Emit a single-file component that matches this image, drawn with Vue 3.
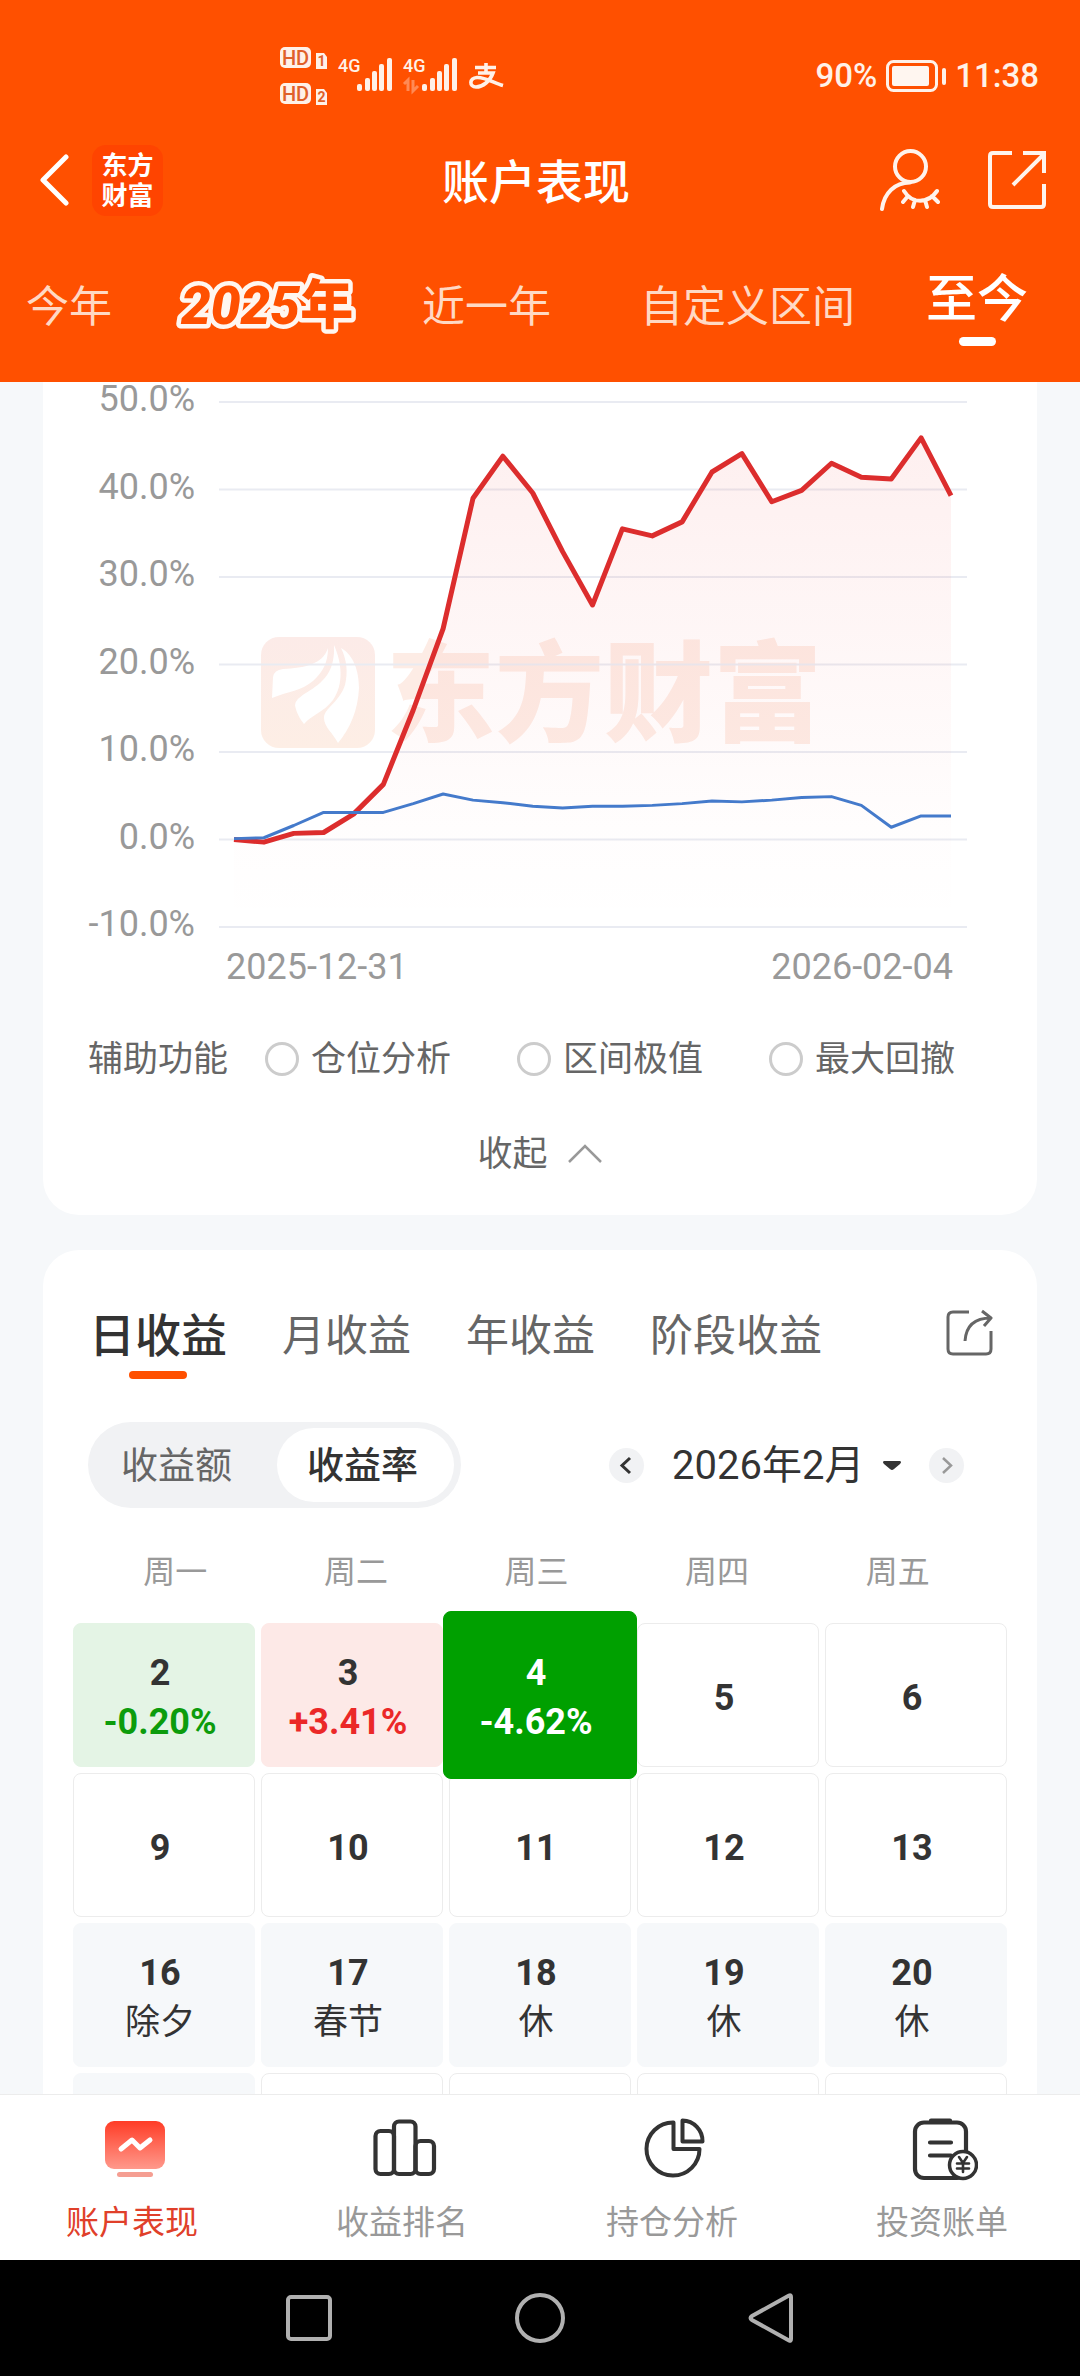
<template>
  <div class="app">
    <header class="header">
      <div class="status-bar">
        <svg class="status-icons" viewBox="0 0 224 62" aria-hidden="true">
          <g v-for="(n, i) in ['1', '2']" :key="n">
            <rect x="0" :y="2 + i * 36" width="31" height="21" rx="5" fill="#fff1e8" />
            <text x="15.5" :y="20 + i * 36" class="hd-text">HD</text>
            <path :d="`M36 ${8 + i * 36}h8l3 4v12h-11z`" fill="#fff1e8" />
            <text x="41.5" :y="21 + i * 36" class="sim-text">{{ n }}</text>
          </g>
          <g v-for="offset in [0, 65]" :key="offset">
            <text :x="58 + offset" y="27" class="net-text">4G</text>
            <rect
              v-for="(top, b) in signalTops"
              :key="top"
              :x="signalLefts[b] + offset"
              :y="top"
              width="5"
              :height="46 - top"
              rx="2"
              fill="#fff1e8"
            />
          </g>
          <path d="M124 39l4-4v11M133 35v11l5-5" fill="none" stroke="#ff8a55" stroke-width="3" />
          <path
            d="M195 22.5H216M206 18V28M198 28H213C210 36 203 42 196 42C189 42 189 33 197 32.5C205 32 214 38 223 40.5"
            fill="none"
            stroke="#fff1e8"
            stroke-width="3.6"
          />
        </svg>
        <div class="status-right">
          <span>90%</span>
          <svg class="battery" viewBox="0 0 60 32" aria-hidden="true">
            <rect x="1.5" y="1.5" width="49" height="29" rx="6" fill="none" stroke="#fff1e8" stroke-width="3" />
            <rect x="6" y="6" width="37" height="20" rx="2" fill="#fff6f0" />
            <rect x="56" y="8" width="4" height="17" rx="2" fill="#fff1e8" />
          </svg>
          <span>11:38</span>
        </div>
      </div>

      <div class="title-row">
        <div class="title-left">
          <button class="btn-icon back" aria-label="返回">
            <svg viewBox="0 0 30 52" width="30" height="52">
              <path d="M27 3L4 26L27 49" fill="none" stroke="#fff" stroke-width="5" stroke-linecap="round" stroke-linejoin="round" />
            </svg>
          </button>
          <div class="brand">东方<br>财富</div>
        </div>
        <h1 class="page-title">账户表现</h1>
        <div class="title-right">
          <button class="btn-icon" aria-label="隐藏账户">
            <svg viewBox="0 0 60 62" width="60" height="62" fill="none" stroke="#fff3ec" stroke-width="4" stroke-linecap="round">
              <circle cx="30.5" cy="17.5" r="15.5" />
              <path d="M2 60C4 44 15 33.5 30 33.5" />
              <path d="M24 42C32 55 48 55 57 42M28 47l-5 6M35 51l-2 7M45 51l2 7M52 47l6 6" />
            </svg>
          </button>
          <button class="btn-icon" aria-label="分享">
            <svg viewBox="0 0 58 58" width="58" height="58" fill="none" stroke="#fff3ec" stroke-width="4">
              <path d="M24 2H5Q2 2 2 5V53Q2 56 5 56H53Q56 56 56 53V33M35 2H56V22M25 34L56 3" />
            </svg>
          </button>
        </div>
      </div>

      <nav class="range-tabs">
        <button
          v-for="tab in rangeTabs"
          :key="tab"
          class="range-tab"
          :class="{ active: tab === activeRange, wide: tab === '自定义区间' }"
          @click="activeRange = tab"
        >
          <svg v-if="tab === '2025年'" class="year-sticker" viewBox="0 0 180 60">
            <text x="4" y="47"><tspan class="italic">2025</tspan>年</text>
          </svg>
          <template v-else>{{ tab }}</template>
        </button>
      </nav>
    </header>

    <main class="content">
      <section class="card chart-card">
        <svg class="chart" viewBox="0 0 994 610">
          <defs>
            <linearGradient id="areaFill" x1="0" y1="56" x2="0" y2="545" gradientUnits="userSpaceOnUse">
              <stop offset="0" stop-color="#f03c3c" stop-opacity="0.08" />
              <stop offset="0.8" stop-color="#f03c3c" stop-opacity="0.01" />
              <stop offset="1" stop-color="#f03c3c" stop-opacity="0" />
            </linearGradient>
            <linearGradient id="markFill" x1="0" y1="0" x2="0" y2="1">
              <stop offset="0" stop-color="#fcebe8" />
              <stop offset="1" stop-color="#fdeee5" />
            </linearGradient>
          </defs>

          <!-- Logo chìm phía sau biểu đồ -->
          <rect x="218" y="255" width="114" height="111" rx="18" fill="url(#markFill)" />
          <g fill="#fff">
            <path d="M285 266C280 282 262 286 240 287Q231 288 230 295L229 316C246 309 258 309 270 299C280 290 285 280 285 266Z" />
            <path d="M291 263C292 286 284 298 266 309Q252 317 252 323C253 330 257 337 261 342C270 332 281 330 290 318C301 302 299 281 291 263Z" />
            <path d="M298 266C311 273 316 290 316 306C315 328 307 347 295 361C290 351 281 345 281 336C281 326 296 321 302 303C305 291 304 278 298 266Z" />
          </g>
          <text class="watermark" x="343" y="351">东方财富</text>

          <g v-for="(tick, i) in ticks" :key="tick">
            <line x1="176" x2="924" :y1="toY(tick)" :y2="toY(tick)" class="grid-line" />
            <text x="152" :y="29 + i * 87.5" class="axis-text end">{{ tick.toFixed(1) }}%</text>
          </g>
          <path :d="areaPath" fill="url(#areaFill)" />
          <polyline :points="toPoints(accountSeries)" class="line account" />
          <polyline :points="toPoints(indexSeries)" class="line index" />
          <text x="183" y="597" class="axis-text">2025-12-31</text>
          <text x="910" y="597" class="axis-text end">2026-02-04</text>
        </svg>

        <div class="assist-row">
          <span class="assist-text">辅助功能</span>
          <div class="assist-options">
            <label v-for="opt in assistOptions" :key="opt" class="assist-option">
              <input type="radio" name="assist" :value="opt" v-model="assist">
              <span class="assist-text">{{ opt }}</span>
            </label>
          </div>
        </div>
        <button class="collapse">
          <span class="assist-text">收起</span>
          <svg viewBox="0 0 36 20" width="36" height="20">
            <path d="M2 18L18 2L34 18" fill="none" stroke="#999" stroke-width="2.5" />
          </svg>
        </button>
      </section>

      <section class="card profit-card">
        <div class="profit-head">
          <div class="profit-tabs">
            <button
              v-for="tab in profitTabs"
              :key="tab"
              class="profit-tab"
              :class="{ active: tab === activeProfit }"
              @click="activeProfit = tab"
            >{{ tab }}</button>
          </div>
          <button class="btn-icon share" aria-label="分享收益">
            <svg viewBox="0 0 48 48" width="48" height="48" fill="none" stroke="#666" stroke-width="3" stroke-linejoin="round">
              <path d="M24 3H8Q3 3 3 8V40Q3 45 8 45H41Q46 45 46 40V22" />
              <path d="M20 32C21 17 29 9 46 9M37 2L46 9L39 17" />
            </svg>
          </button>
        </div>

        <div class="filter-row">
          <div class="segment">
            <button
              v-for="m in modes"
              :key="m"
              class="segment-item"
              :class="{ active: m === mode }"
              @click="mode = m"
            >{{ m }}</button>
          </div>
          <div class="month-nav">
            <button class="circle" aria-label="上个月">
              <svg viewBox="0 0 35 35" width="35" height="35">
                <path d="M21 10L13 17.5L21 25" fill="none" stroke="#333" stroke-width="3" />
              </svg>
            </button>
            <label class="month-select">
              <select v-model="month" aria-label="月份">
                <option>2026年2月</option>
              </select>
              <svg viewBox="0 0 18 9" width="18" height="9"><path d="M1 0H17Q19 1 17 3L11 8Q9 10 7 8L1 3Q-1 1 1 0Z" fill="#333" /></svg>
            </label>
            <button class="circle" aria-label="下个月">
              <svg viewBox="0 0 35 35" width="35" height="35">
                <path d="M14 10L22 17.5L14 25" fill="none" stroke="#999" stroke-width="2.5" />
              </svg>
            </button>
          </div>
        </div>

        <div class="weekdays">
          <span v-for="w in weekdays" :key="w">{{ w }}</span>
        </div>
        <div class="calendar">
          <button v-for="(d, i) in days" :key="i" class="day" :class="d.type">
            <strong v-if="d.date">{{ d.date }}</strong>
            <span v-if="d.rate" class="rate">{{ d.rate }}</span>
            <span v-if="d.note" class="note">{{ d.note }}</span>
          </button>
        </div>
      </section>
    </main>

    <nav class="tab-bar">
      <a href="#" class="tab-item active">
        <svg viewBox="0 0 66 66" width="66" height="66">
          <defs>
            <linearGradient id="screenFill" x1="0" y1="0" x2="0" y2="1">
              <stop offset="0" stop-color="#ff3c26" />
              <stop offset="1" stop-color="#ff998c" />
            </linearGradient>
          </defs>
          <rect x="3" y="6" width="60" height="48" rx="9" fill="url(#screenFill)" />
          <path d="M19 34L30 25L38 33L48 25" fill="none" stroke="#fff" stroke-width="5" stroke-linecap="round" stroke-linejoin="round" />
          <rect x="15" y="57" width="36" height="5" rx="2.5" fill="#f59e92" />
        </svg>
        <span class="tab-text">账户表现</span>
      </a>
      <a href="#" class="tab-item">
        <svg viewBox="0 0 66 66" width="66" height="66" fill="none" stroke="#333" stroke-width="4.2">
          <rect x="3.5" y="16" width="18.5" height="43" rx="5" />
          <rect x="22" y="6.5" width="21.5" height="52.5" rx="5" />
          <rect x="43.5" y="26" width="18.5" height="33" rx="5" />
        </svg>
        <span class="tab-text">收益排名</span>
      </a>
      <a href="#" class="tab-item">
        <svg viewBox="0 0 66 66" width="66" height="66" fill="none" stroke="#333" stroke-width="4" stroke-linejoin="round">
          <path d="M31.5 7.5A26.5 26.5 0 1 0 57.5 34H31.5Z" />
          <path d="M40.5 5.5A20.5 20.5 0 0 1 60.5 26.5H40.5Z" />
        </svg>
        <span class="tab-text">持仓分析</span>
      </a>
      <a href="#" class="tab-item">
        <svg viewBox="0 0 66 66" width="66" height="66" fill="none" stroke="#333" stroke-width="4.2" stroke-linecap="round">
          <rect x="3" y="7.5" width="51" height="55.5" rx="9" />
          <path d="M19 5.5H38M18 27.5H39M18 40.5H39" />
          <circle cx="51" cy="50" r="13.5" fill="#fff" stroke-width="3.5" />
          <path d="M47 42L51 48L55 42M51 48V57M45 48.5H57M45 53.5H57" stroke-width="2.6" />
        </svg>
        <span class="tab-text">投资账单</span>
      </a>
    </nav>

    <div class="system-nav">
      <button class="btn-icon" aria-label="最近任务">
        <svg viewBox="0 0 50 50" width="50" height="50"><rect x="4" y="4" width="42" height="42" rx="3" /></svg>
      </button>
      <button class="btn-icon" aria-label="主屏幕">
        <svg viewBox="0 0 50 50" width="50" height="50"><circle cx="25" cy="25" r="23" /></svg>
      </button>
      <button class="btn-icon" aria-label="返回上级">
        <svg viewBox="0 0 50 50" width="50" height="50"><path d="M43 2.5Q45 1.5 45 4V46Q45 48.5 43 47.5L6 27Q3 25 6 23Z" /></svg>
      </button>
    </div>
  </div>
</template>

<script setup>
import { ref, computed } from 'vue';

const signalTops = [39, 33, 26, 19, 13];
const signalLefts = [77, 85, 92, 99, 107];

const rangeTabs = ['今年', '2025年', '近一年', '自定义区间', '至今'];
const activeRange = ref('至今');

const ticks = [50, 40, 30, 20, 10, 0, -10];
const accountSeries = ref([
  0, -0.3, 0.7, 0.8, 2.9, 6.3, 14.8, 24.1, 39, 43.8, 39.6, 32.9, 26.8,
  35.5, 34.7, 36.3, 42, 44.1, 38.6, 39.9, 43, 41.4, 41.2, 45.9, 39.3
]);
const indexSeries = ref([
  0.1, 0.2, 1.6, 3.1, 3.1, 3.1, 4.1, 5.2, 4.5, 4.2, 3.8, 3.6, 3.8,
  3.8, 3.9, 4.1, 4.4, 4.3, 4.5, 4.8, 4.9, 3.9, 1.4, 2.7, 2.7
]);

const toX = (i) => 191 + (i * 717) / 24;
const toY = (v) => 20 + (50 - v) * 8.75;
const toPoints = (list) => list.map((v, i) => `${toX(i)},${toY(v)}`).join(' ');
const areaPath = computed(() => `M191,545 L${toPoints(accountSeries.value)} L908,545 Z`);

const assistOptions = ['仓位分析', '区间极值', '最大回撤'];
const assist = ref('');

const profitTabs = ['日收益', '月收益', '年收益', '阶段收益'];
const activeProfit = ref('日收益');

const modes = ['收益额', '收益率'];
const mode = ref('收益率');
const month = ref('2026年2月');

const weekdays = ['周一', '周二', '周三', '周四', '周五'];
const days = ref([
  { date: 2, rate: '-0.20%', type: 'down' },
  { date: 3, rate: '+3.41%', type: 'up' },
  { date: 4, rate: '-4.62%', type: 'selected' },
  { date: 5 },
  { date: 6 },
  { date: 9 },
  { date: 10 },
  { date: 11 },
  { date: 12 },
  { date: 13 },
  { date: 16, note: '除夕', type: 'holiday' },
  { date: 17, note: '春节', type: 'holiday' },
  { date: 18, note: '休', type: 'holiday' },
  { date: 19, note: '休', type: 'holiday' },
  { date: 20, note: '休', type: 'holiday' },
  { type: 'holiday' },
  {},
  {},
  {},
  {}
]);
</script>

<style>
body { margin: 0; background: #f6f8fa; }
</style>

<style scoped>
.app { height: 100vh; display: flex; flex-direction: column; background: #f6f8fa; color: #333; font-family: Roboto, "Noto Sans CJK SC", sans-serif; }
button { font: inherit; color: inherit; border: none; background: none; padding: 0; margin: 0; cursor: pointer; white-space: nowrap; }
svg { display: block; flex: none; }
.btn-icon { display: flex; }

/* ========== HEADER ========== */
.header { flex: none; background: #ff5000; color: #fff; padding-bottom: 34px; }
.status-bar { display: flex; justify-content: space-between; align-items: center; padding: 45px 41px 0 280px; }
.status-icons { width: 224px; height: 62px; }
.hd-text { font-size: 20px; font-weight: 500; fill: #e0602a; text-anchor: middle; }
.sim-text { font-size: 14px; font-weight: 700; fill: #e0602a; text-anchor: middle; }
.net-text { font-size: 18px; font-weight: 500; fill: #fff1e8; }
.status-right { display: flex; align-items: center; gap: 9px; font-size: 33px; line-height: 40px; font-weight: 500; color: #fff1e8; }
.battery { width: 60px; height: 32px; }

.title-row { display: grid; grid-template-columns: 1fr auto 1fr; align-items: center; height: 146px; padding: 0 34px 0 26px; }
.title-left { display: flex; align-items: center; gap: 23px; }
.back { padding-left: 13px; }
.brand { box-sizing: border-box; width: 71px; height: 71px; padding: 6px 0 4px; border-radius: 14px; background: #ff4400; font-size: 26px; line-height: 30px; font-weight: 700; text-align: center; }
.page-title { margin: 0; padding-top: 6px; font-size: 47px; line-height: 60px; font-weight: 500; }
.title-right { display: flex; justify-content: flex-end; align-items: center; gap: 48px; }

.range-tabs { display: flex; align-items: flex-start; gap: 65px; padding: 17px 20px 0 26px; height: 78px; }
.range-tab { padding-top: 7px; font-size: 43px; line-height: 60px; color: #ffd9c4; }
.range-tab.wide { margin: 0 6px 0 24px; }
.range-tab.active { padding-top: 0; font-size: 51px; font-weight: 500; color: #fff; }
.range-tab.active::after { content: ""; display: block; width: 37px; height: 9px; margin: 7px auto 0; border-radius: 5px; background: #fff; }
.year-sticker { width: 180px; height: 60px; font-size: 53px; font-weight: 900; fill: #ff5000; stroke: #fff6f0; stroke-width: 9px; stroke-linejoin: round; paint-order: stroke; overflow: visible; }
.italic { font-style: italic; }

/* ========== BIỂU ĐỒ ========== */
.content { flex: 1; min-height: 0; overflow: hidden; padding: 0 43px; }
.card { background: #fff; border-radius: 36px; }
.chart-card { border-top-left-radius: 0; border-top-right-radius: 0; padding-bottom: 35px; margin-bottom: 35px; }
.chart { width: 100%; height: auto; }
.grid-line { stroke: #e9ebf2; stroke-width: 2; }
.axis-text { font-size: 36px; fill: #999; }
.end { text-anchor: end; }
.watermark { font-size: 109px; font-weight: 900; fill: #fdece5; }
.line { fill: none; stroke-linejoin: round; }
.line.account { stroke: #dc2d2d; stroke-width: 5; }
.line.index { stroke: #447acb; stroke-width: 3; }

.assist-row { display: flex; align-items: center; gap: 37px; margin-top: 40px; padding: 0 45px; font-size: 35px; line-height: 50px; color: #666; white-space: nowrap; }
.assist-text { padding-top: 3px; }
.assist-options { display: flex; gap: 66px; }
.assist-option { display: flex; align-items: center; gap: 12px; }
.assist-option input { appearance: none; box-sizing: border-box; width: 34px; height: 34px; margin: 0; border: 3px solid #ccc; border-radius: 50%; }
.assist-option input:checked { border: 10px solid #ff5000; }
.collapse { display: flex; align-items: center; gap: 19px; margin: 42px auto 0; font-size: 35px; line-height: 50px; color: #666; }

/* ========== LỊCH LỢI NHUẬN ========== */
.profit-card { padding: 56px 30px 30px; }
.profit-head { display: flex; justify-content: space-between; align-items: flex-start; padding: 0 14px 0 16px; }
.profit-tabs { display: flex; gap: 55px; height: 73px; }
.profit-tab { display: flex; flex-direction: column; align-items: center; font-size: 43px; line-height: 60px; color: #666; }
.profit-tab.active { font-size: 46px; font-weight: 500; color: #333; }
.profit-tab.active::after { content: ""; width: 58px; height: 8px; margin-top: 5px; border-radius: 4px; background: #ff5000; }
.share { padding-top: 3px; }

.filter-row { display: flex; justify-content: space-between; align-items: center; margin-top: 43px; padding: 0 43px 0 15px; }
.segment { display: flex; gap: 17px; padding: 6px 7px; border-radius: 43px; background: #f1f2f4; }
.segment-item { padding: 4px 28px 0 26px; font-size: 37px; line-height: 70px; color: #666; }
.segment-item.active { padding: 4px 36px 0 30px; border-radius: 37px; background: #fff; color: #333; font-weight: 500; }
.month-nav { display: flex; align-items: center; gap: 28px; }
.circle { width: 35px; height: 35px; border-radius: 50%; background: #f1f2f4; }
.month-select { display: flex; align-items: center; gap: 18px; }
.month-select select { appearance: none; border: none; background: none; padding: 2px 0 0; margin: 0; font: inherit; font-size: 40px; line-height: 60px; color: #333; }

.weekdays { display: grid; grid-template-columns: repeat(5, 1fr); margin: 44px 19px 0 12px; font-size: 32px; line-height: 40px; color: #999; text-align: center; }
.calendar { display: grid; grid-template-columns: repeat(5, 1fr); grid-auto-rows: 144px; gap: 6px; margin-top: 31px; }
.day { display: flex; flex-direction: column; align-items: center; justify-content: center; padding: 6px 8px 0 0; border: 1px solid #ececec; border-radius: 8px; background: #fff; font-size: 36px; line-height: 49px; color: #333; }
.day strong, .rate { font-weight: 700; }
.note { font-size: 35px; }
.day.down { background: #e4f4e5; border-color: #e4f4e5; }
.day.down .rate { color: #0c9c0c; }
.day.up { background: #fde9e7; border-color: #fde9e7; }
.day.up .rate { color: #eb2828; }
.day.selected { position: relative; z-index: 1; margin: -12px -6px; border-color: #00a000; background: #00a000; color: #fff; }
.day.holiday { background: #f6f8fa; border-color: #f6f8fa; }

/* ========== THANH DƯỚI ========== */
.tab-bar { flex: none; display: grid; grid-template-columns: repeat(4, 1fr); padding: 20px 0 13px; border-top: 1px solid #ececec; background: #fff; }
.tab-item { display: flex; flex-direction: column; align-items: center; gap: 18px; font-size: 33px; line-height: 48px; color: #999; text-decoration: none; }
.tab-item.active { color: #e0402a; }
.tab-text { padding-right: 6px; }
.system-nav { flex: none; display: flex; justify-content: center; align-items: center; gap: 181px; height: 116px; background: #000; }
.system-nav svg { fill: none; stroke: #b0b0b0; stroke-width: 4; }
</style>
